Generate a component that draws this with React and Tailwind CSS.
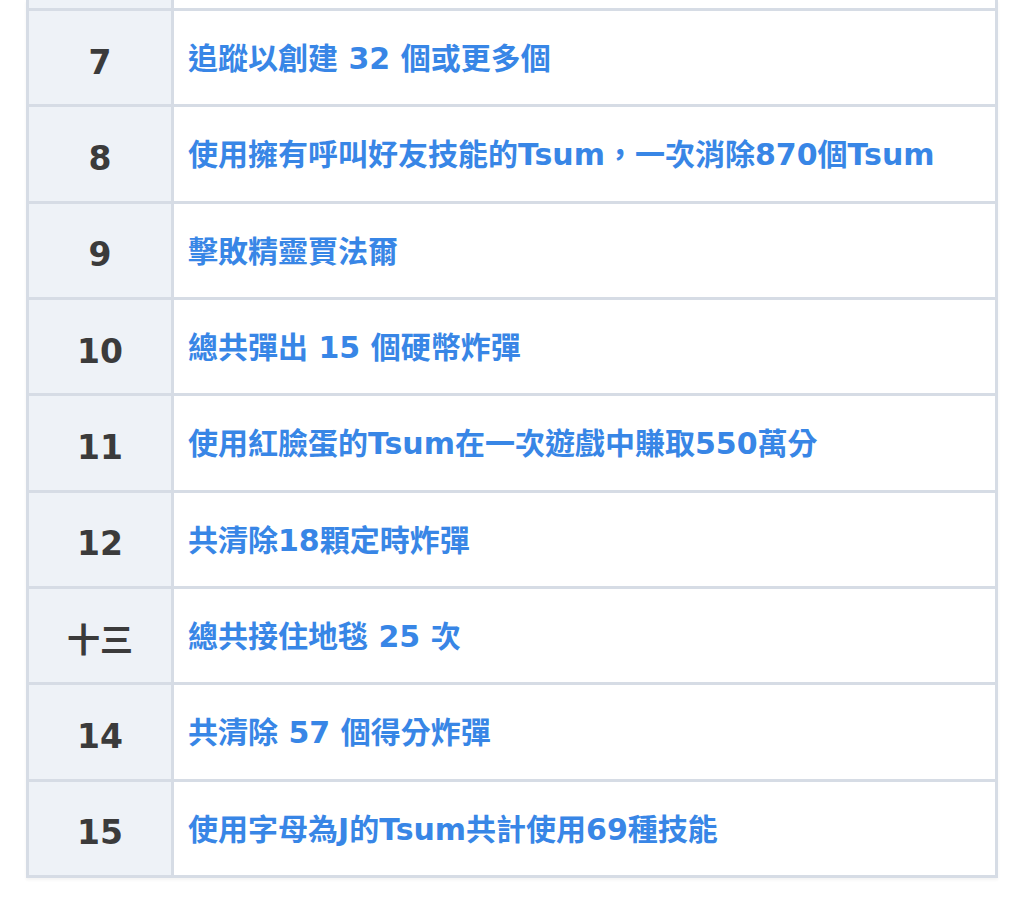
import React from "react";

const rows = [
  ["7", "追蹤以創建 32 個或更多個"],
  ["8", "使用擁有呼叫好友技能的Tsum，一次消除870個Tsum"],
  ["9", "擊敗精靈賈法爾"],
  ["10", "總共彈出 15 個硬幣炸彈"],
  ["11", "使用紅臉蛋的Tsum在一次遊戲中賺取550萬分"],
  ["12", "共清除18顆定時炸彈"],
  ["十三", "總共接住地毯 25 次"],
  ["14", "共清除 57 個得分炸彈"],
  ["15", "使用字母為J的Tsum共計使用69種技能"],
];

const font = { fontFamily: '"DejaVu Sans", "Noto Sans CJK TC", sans-serif' };

export default function App() {
  return (
    <div className="w-[1024px] h-[899px] bg-white overflow-hidden" style={font}>
      <div className="ml-[26px] w-[972px] border-x-[3px] border-b-[3px] border-[#d6dce5] shadow-[0_2px_3px_rgba(0,0,0,0.05)]">
        <div className="grid grid-cols-[145px_1fr] h-[8px]">
          <div className="bg-[#eef2f7] border-r-[3px] border-[#d6dce5]" />
          <div className="bg-white" />
        </div>
        {rows.map(([n, t]) => (
          <div
            key={n}
            className="grid grid-cols-[145px_1fr] h-[96.33px] border-t-[3px] border-[#d6dce5]"
          >
            <div className="bg-[#eef2f7] border-r-[3px] border-[#d6dce5] flex items-center justify-center pt-[9px] text-[33px] font-bold leading-none text-[#3b3b3b]">
              {n}
            </div>
            <div className="bg-white flex items-center pl-[14px] pt-[3px] text-[30px] font-bold leading-none text-[#3886e6] whitespace-nowrap">
              {t}
            </div>
          </div>
        ))}
      </div>
    </div>
  );
}
